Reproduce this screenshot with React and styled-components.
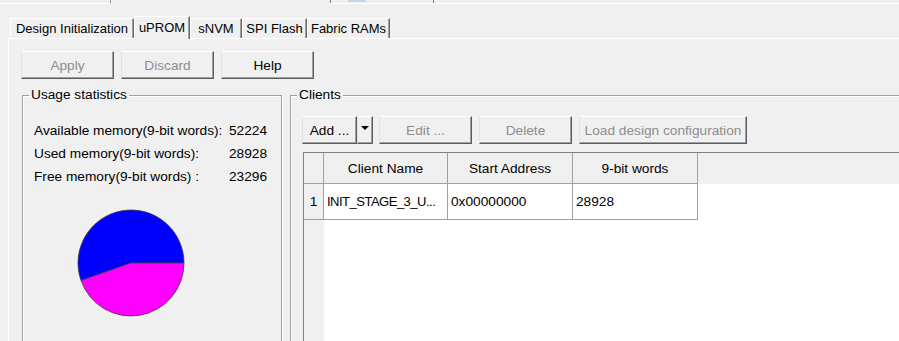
import styled, { createGlobalStyle } from "styled-components";

const GlobalStyle = createGlobalStyle`
  html, body {
    margin: 0;
    padding: 0;
    background: #f0f0f0;
    overflow: hidden;
  }
  body {
    font-family: "Liberation Sans", Arial, sans-serif;
    font-size: 13.7px;
    color: #000;
  }
`;

const tabs = [
  { label: "Design Initialization", width: 124 },
  { label: "uPROM", width: 56, active: true },
  { label: "sNVM", width: 52 },
  { label: "SPI Flash", width: 65 },
  { label: "Fabric RAMs", width: 83 },
];

const stats = [
  { label: "Available memory(9-bit words):", value: 52224 },
  { label: "Used memory(9-bit words):", value: 28928 },
  { label: "Free memory(9-bit words) :", value: 23296 },
];

const clients = [
  { name: "INIT_STAGE_3_U...", address: "0x00000000", words: 28928 },
];

function Pie({ total, used }) {
  const r = 53;
  const c = 54;
  const angle = (used / total) * Math.PI * 2;
  const x = c + r * Math.cos(angle);
  const y = c - r * Math.sin(angle);
  const large = angle > Math.PI ? 1 : 0;
  return (
    <PieSvg width="108" height="108" viewBox="0 0 108 108">
      <path
        d={`M${c},${c} L${c + r},${c} A${r},${r} 0 ${large} 0 ${x},${y} Z`}
        fill="#0000ff"
        stroke="#3c3c3c"
        strokeWidth="0.8"
      />
      <path
        d={`M${c},${c} L${x},${y} A${r},${r} 0 ${1 - large} 0 ${c + r},${c} Z`}
        fill="#ff00ff"
        stroke="#3c3c3c"
        strokeWidth="0.8"
      />
    </PieSvg>
  );
}

export default function App() {
  return (
    <>
      <GlobalStyle />
      <TopStrip>
        <StripBox />
        <StripGap />
        <StripLine>
          <StripMark />
          <StripBlue />
          <StripMark $wide />
        </StripLine>
      </TopStrip>
      <Notebook>
        <TabBar>
          {tabs.map((t) => (
            <Tab key={t.label} $active={t.active} style={{ width: t.width }}>
              {t.label}
            </Tab>
          ))}
        </TabBar>
        <Panel>
          <ButtonRow>
            <Button disabled>Apply</Button>
            <Button disabled>Discard</Button>
            <Button>Help</Button>
          </ButtonRow>
          <Groups>
            <UsageGroup>
              <Legend>Usage statistics</Legend>
              <StatsGrid>
                {stats.map((s) => (
                  <StatRow key={s.label}>
                    <span>{s.label}</span>
                    <span>{s.value}</span>
                  </StatRow>
                ))}
              </StatsGrid>
              <Pie total={52224} used={28928} />
            </UsageGroup>
            <ClientsGroup>
              <Legend>Clients</Legend>
              <Toolbar>
                <SplitButton>
                  <Button $w={55}>Add ...</Button>
                  <Button $w={16}>
                    <Arrow />
                  </Button>
                </SplitButton>
                <Button disabled>Edit ...</Button>
                <Button disabled>Delete</Button>
                <Button disabled $w={168}>
                  Load design configuration
                </Button>
              </Toolbar>
              <Grid>
                <HeadCell />
                <HeadCell>Client Name</HeadCell>
                <HeadCell>Start Address</HeadCell>
                <HeadCell>9-bit words</HeadCell>
                <HeadFill />
                {clients.map((c, i) => (
                  <Row key={c.name}>
                    <RowNum>{i + 1}</RowNum>
                    <Cell $tight>{c.name}</Cell>
                    <Cell>{c.address}</Cell>
                    <Cell>{c.words}</Cell>
                    <BodyFill />
                  </Row>
                ))}
                <Gutter />
                <BodyFill $span />
              </Grid>
            </ClientsGroup>
          </Groups>
        </Panel>
      </Notebook>
    </>
  );
}

const TopStrip = styled.div`
  display: flex;
  height: 4px;
`;
const StripBox = styled.div`
  width: 110px;
  height: 3px;
  border-right: 1px solid #a0a0a0;
  border-bottom: 1px solid #fff;
`;
const StripGap = styled.div`
  width: 219px;
`;
const StripLine = styled.div`
  flex: 1;
  display: flex;
  height: 3px;
  border-bottom: 1px solid #fff;
`;
const StripMark = styled.div`
  width: ${(p) => (p.$wide ? "1px" : "17px")};
  border-left: 1px solid #7a7a7a;
  ${(p) => p.$wide && "margin-left: 67px;"}
`;
const StripBlue = styled.div`
  width: 18px;
  height: 2px;
  background: #c5d6ea;
`;

const Notebook = styled.div`
  margin: 12px 0 0 8px;
`;
const TabBar = styled.div`
  display: flex;
  align-items: flex-end;
  height: 22px;
  padding-left: 2px;
  position: relative;
  z-index: 1;
`;
const Tab = styled.div`
  box-sizing: border-box;
  height: ${(p) => (p.$active ? "23px" : "20px")};
  margin-bottom: ${(p) => (p.$active ? "-1px" : "0")};
  padding-bottom: ${(p) => (p.$active ? "2px" : "0")};
  display: flex;
  align-items: center;
  justify-content: center;
  border-top: 1px solid #fff;
  border-left: 1px solid #fff;
  border-right: 1px solid #696969;
  box-shadow: inset -1px 0 #a0a0a0;
  background: #f0f0f0;
  font-size: 13px;
  white-space: nowrap;
`;
const Panel = styled.div`
  border-top: 1px solid #fff;
  border-left: 1px solid #fff;
  height: 320px;
  padding: 12px 0 0 12px;
`;

const ButtonRow = styled.div`
  display: flex;
  gap: 7px;
`;
const Button = styled.button`
  box-sizing: border-box;
  width: ${(p) => p.$w || 93}px;
  height: 28px;
  padding: 0;
  display: flex;
  align-items: center;
  justify-content: center;
  background: #f0f0f0;
  border: 1px solid;
  border-color: #fff #5a5a5a #5a5a5a #e3e3e3;
  box-shadow: inset -1px -1px #a0a0a0;
  font-family: inherit;
  font-size: 13.7px;
  font-weight: 400;
  color: #000;
  &:disabled {
    color: #8d8d8d;
  }
`;
const SplitButton = styled.div`
  display: flex;
  margin-right: -1px;
`;
const Arrow = styled.span`
  width: 0;
  height: 0;
  border-left: 4px solid transparent;
  border-right: 4px solid transparent;
  border-top: 4px solid #000;
  margin-bottom: 4px;
`;

const Groups = styled.div`
  display: flex;
  gap: 8px;
  margin: 8px 0 0 1px;
`;
const Group = styled.fieldset`
  box-sizing: border-box;
  margin: 0;
  padding: 0;
  height: 280px;
  border: 1px solid #a0a0a0;
  box-shadow: 1px 1px #fff, inset 1px 1px #fff;
`;
const UsageGroup = styled(Group)`
  width: 260px;
  flex-shrink: 0;
`;
const ClientsGroup = styled(Group)`
  flex: 1;
  margin-right: -40px;
  min-width: 0;
`;
const Legend = styled.legend`
  margin-left: 6px;
  padding: 0 2px;
  line-height: 16px;
`;

const StatsGrid = styled.div`
  padding: 16px 0 0 11px;
`;
const StatRow = styled.div`
  display: grid;
  grid-template-columns: 195px auto;
  line-height: 23px;
`;
const PieSvg = styled.svg`
  display: block;
  margin: 21px 0 0 54px;
`;

const Toolbar = styled.div`
  display: flex;
  gap: 7px;
  padding: 13px 0 0 11px;
`;
const Grid = styled.div`
  display: grid;
  grid-template-columns: 20px 124px 125px 125px 1fr;
  grid-template-rows: 31px 36px 1fr;
  height: 200px;
  margin: 8px 0 0 12px;
  border-top: 1px solid #828282;
  border-left: 1px solid #828282;
  background: #fff;
`;
const HeadCell = styled.div`
  display: flex;
  align-items: center;
  justify-content: center;
  background: #f0f0f0;
  border-right: 1px solid #a0a0a0;
  border-bottom: 1px solid #a0a0a0;
`;
const HeadFill = styled.div`
  background: #f0f0f0;
`;
const Row = styled.div`
  display: contents;
`;
const RowNum = styled(HeadCell)`
  justify-content: center;
`;
const Cell = styled.div`
  display: flex;
  align-items: center;
  padding-left: 3px;
  border-right: 1px solid #a0a0a0;
  border-bottom: 1px solid #a0a0a0;
  white-space: nowrap;
  overflow: hidden;
  ${(p) => p.$tight && "font-size: 13px; letter-spacing: -0.5px;"}
`;
const BodyFill = styled.div`
  background: #fff;
  ${(p) => p.$span && "grid-column: 2 / -1;"}
`;
const Gutter = styled.div`
  background: #f0f0f0;
`;
